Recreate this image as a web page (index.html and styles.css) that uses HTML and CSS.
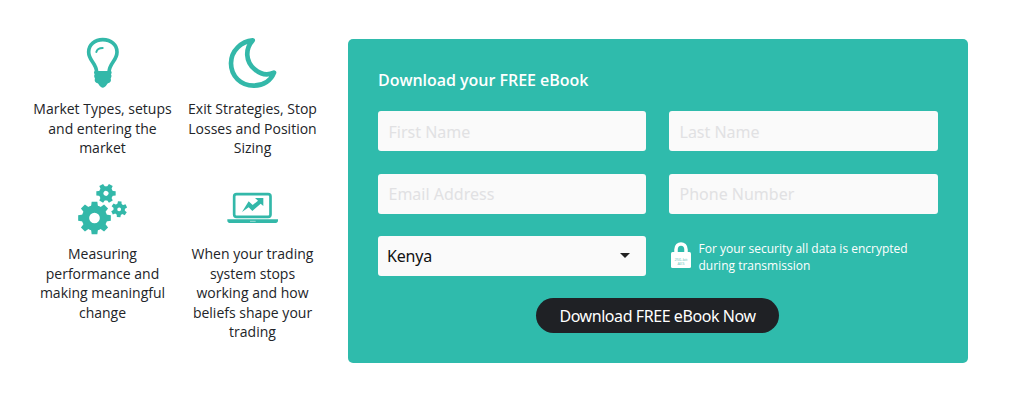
FILE: index.html
```html
<!DOCTYPE html>
<html lang="en">
<head>
<meta charset="utf-8">
<title>Download your FREE eBook</title>
<link rel="stylesheet" href="styles.css">
</head>
<body>
<main class="page">
  <section class="topics">
    <article class="topic">
      <svg class="topic-icon" viewBox="-6 0 210 195" aria-hidden="true">
        <path class="line" d="M80 126C78 98 56 92 56 66C56 44 74 29 98.500 29C123 29 141 44 141 66C141 92 119 98 117 126"/>
        <path class="thin" d="M79 66C81 58 88 54 98 54"/>
        <path class="solid" d="M76 123H121C126 123 126 129 123 133C126 138 124 142 122 146C125 153 120 158 114 160C109 164 107 173 98.500 173C90 173 88 164 83 160C77 158 72 153 75 146C73 142 71 138 74 133C71 129 71 123 76 123Z"/>
      </svg>
      <p class="topic-text">Market Types, setups and entering the market</p>
    </article>
    <article class="topic">
      <svg class="topic-icon" viewBox="-6 0 210 195" aria-hidden="true">
        <path class="line moon" d="M98 31C65 34 33 61 33 100C33 139 63 167 101 167C131 167 153 151 162 128C145 136 123 134 104 118C76 94 75 57 98 31Z"/>
      </svg>
      <p class="topic-text">Exit Strategies, Stop Losses and Position Sizing</p>
    </article>
    <article class="topic">
      <svg class="topic-icon" viewBox="-6 0 210 195" aria-hidden="true">
        <defs>
          <g id="big-tooth"><path d="M-11 -30L-8.500 -49H8.500L11 -30Z"/></g>
          <g id="small-tooth"><path d="M-8 -15L-6.500 -29H6.500L8 -15Z"/></g>
        </defs>
        <g class="solid" transform="translate(73.500 129)">
          <circle class="ring-big" r="27"/>
          <use href="#big-tooth"/><use href="#big-tooth" transform="rotate(45)"/><use href="#big-tooth" transform="rotate(90)"/><use href="#big-tooth" transform="rotate(135)"/><use href="#big-tooth" transform="rotate(180)"/><use href="#big-tooth" transform="rotate(225)"/><use href="#big-tooth" transform="rotate(270)"/><use href="#big-tooth" transform="rotate(315)"/>
        </g>
        <g class="solid" transform="translate(108 55) rotate(30)">
          <circle class="ring-small" r="14.500"/>
          <use href="#small-tooth"/><use href="#small-tooth" transform="rotate(60)"/><use href="#small-tooth" transform="rotate(120)"/><use href="#small-tooth" transform="rotate(180)"/><use href="#small-tooth" transform="rotate(240)"/><use href="#small-tooth" transform="rotate(300)"/>
        </g>
        <g class="solid" transform="translate(147.500 103) rotate(4) scale(.82)">
          <circle class="ring-small" r="14"/>
          <use href="#small-tooth"/><use href="#small-tooth" transform="rotate(60)"/><use href="#small-tooth" transform="rotate(120)"/><use href="#small-tooth" transform="rotate(180)"/><use href="#small-tooth" transform="rotate(240)"/><use href="#small-tooth" transform="rotate(300)"/>
        </g>
      </svg>
      <p class="topic-text">Measuring performance and making meaningful change</p>
    </article>
    <article class="topic">
      <svg class="topic-icon" viewBox="-6 -15 210 195" aria-hidden="true">
        <rect class="screen" x="42.500" y="42.500" width="109" height="68" rx="7"/>
        <path class="solid" d="M22 118H174V122C174 127 170 129 164 129H32C26 129 22 127 22 122Z"/>
        <path class="slot" d="M90 124H107"/>
        <path class="solid" d="M66 96L86 64L98 75L114 62L105 54H130V78L122 71L97 93L86 82Z"/>
      </svg>
      <p class="topic-text">When your trading system stops working and how beliefs shape your trading</p>
    </article>
  </section>

  <form class="signup">
    <h1 class="signup-title">Download your FREE eBook</h1>
    <div class="fields">
      <input class="field" type="text" placeholder="First Name" aria-label="First Name">
      <input class="field" type="text" placeholder="Last Name" aria-label="Last Name">
      <input class="field contact" type="email" placeholder="Email Address" aria-label="Email Address">
      <input class="field contact" type="tel" placeholder="Phone Number" aria-label="Phone Number">
      <div class="field country">
        <span class="country-name">Kenya</span>
        <svg class="caret" viewBox="0 0 10 5" aria-hidden="true"><path d="M0 0H10L5 5Z"/></svg>
      </div>
      <div class="security">
        <svg class="lock" viewBox="0 0 20 26" aria-hidden="true">
          <path class="shackle" d="M5 12V7.500C5 0 15 0 15 7.500V12"/>
          <rect class="lock-body" y="10" width="20" height="16" rx="1.500"/>
          <text class="lock-text" x="10" y="18.500">256-bit</text>
          <text class="lock-text" x="10" y="22.800">AES</text>
        </svg>
        <p class="security-text">For your security all data is encrypted during transmission</p>
      </div>
    </div>
    <button class="submit" type="button">Download FREE eBook Now</button>
  </form>
</main>
</body>
</html>
```
FILE: styles.css
```css
* { box-sizing: border-box; }
body {
  margin: 0;
  background: #fff;
  color: #222428;
  font-family: "Open Sans", "Noto Sans", sans-serif;
}
.page {
  display: flex;
  align-items: flex-start;
  height: 401px;
  padding: 30px 52px 0 27.5px;
}
.topics {
  display: grid;
  grid-template-columns: 150px 150px;
  row-gap: 17.7px;
  width: 320.5px;
}
.topic {
  display: flex;
  flex-direction: column;
  align-items: center;
  gap: 4px;
}
.topic-icon {
  width: 70px;
  height: 65px;
}
.topic-text {
  width: 140px;
  margin: 0;
  font-size: 14px;
  line-height: 19.5px;
  text-align: center;
}
.line { fill: none; stroke: #33b8a9; stroke-width: 11; }
.moon { stroke-width: 14; stroke-linejoin: round; }
.thin { fill: none; stroke: #33b8a9; stroke-width: 6; stroke-linecap: round; }
.solid { fill: #33b8a9; }
.ring-big { fill: none; stroke: #33b8a9; stroke-width: 22; }
.ring-small { fill: none; stroke: #33b8a9; stroke-width: 14; }
.screen { fill: none; stroke: #33b8a9; stroke-width: 8; }
.slot { stroke: #9adbd3; stroke-width: 3; }

.signup {
  display: flex;
  flex-direction: column;
  width: 620px;
  height: 324px;
  margin-top: 9px;
  padding: 30px;
  border-radius: 5px;
  background: #2fbbac;
}
.signup-title {
  margin: 0 0 20px;
  color: #fff;
  font-size: 16px;
  font-weight: 600;
  line-height: 22px;
  letter-spacing: -0.03px;
}
.fields {
  display: grid;
  grid-template-columns: 268px 269px;
  grid-template-rows: 40px 40px 40px;
  column-gap: 23px;
  row-gap: 22.5px;
}
.field {
  width: 100%;
  height: 40px;
  margin: 0;
  padding: 2px 10px 0 10.5px;
  border: 0;
  border-radius: 3px;
  background: #fafafa;
  color: #111;
  font: 16px "Noto Sans", sans-serif;
}
.contact { padding-top: 0; }
.field::placeholder { color: #e1e1e3; opacity: 1; }
.country {
  display: flex;
  align-items: center;
  justify-content: space-between;
  padding: 0 16px 0 9px;
}
.country-name { letter-spacing: -0.2px; }
.caret { width: 10px; height: 5px; margin-bottom: 2px; fill: #222; }
.security {
  display: flex;
  align-items: flex-start;
  gap: 7.5px;
  padding: 4px 0 0 2px;
}
.lock { width: 20px; height: 26px; margin-top: 2px; flex: none; }
.shackle { fill: none; stroke: #fff; stroke-width: 3.5; }
.lock-body { fill: #fff; }
.lock-text { fill: #62c4b9; font: 4px "Open Sans", sans-serif; text-anchor: middle; }
.security-text {
  width: 225px;
  margin: 0;
  color: #fff;
  font-size: 12px;
  line-height: 17px;
}
.submit {
  align-self: center;
  width: 243px;
  height: 35px;
  margin: 22px 1px 0 0;
  padding: 0;
  border: 0;
  border-radius: 18px;
  background: #1f2125;
  color: #fff;
  font: 16px "Noto Sans", sans-serif;
  letter-spacing: -0.43px;
}
```
